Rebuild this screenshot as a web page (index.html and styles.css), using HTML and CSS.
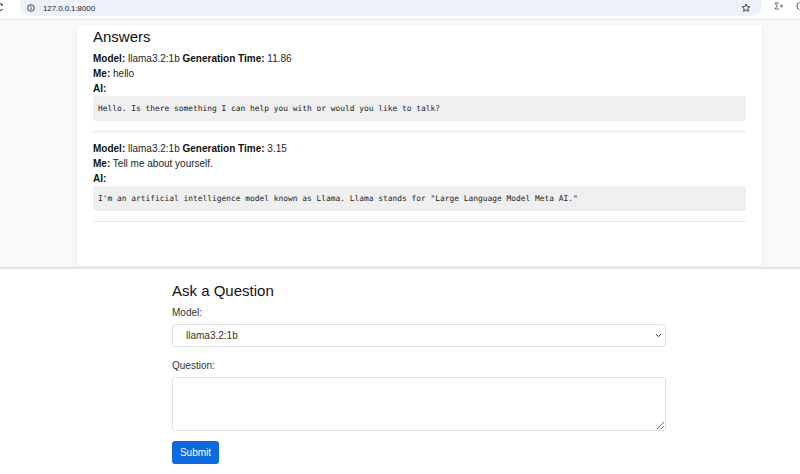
FILE: index.html
```html
<!DOCTYPE html>
<html lang="en">
<head>
<meta charset="utf-8">
<title>Ask</title>
<link rel="stylesheet" href="styles.css">
</head>
<body>
<div class="chrome">
  <svg class="reload" width="8" height="10" viewBox="0 0 8 10"><path d="M5.2 2.6 A3.2 3.2 0 1 0 5.6 7.2" fill="none" stroke="#444" stroke-width="1.1"/><path d="M3.6 1.2 L6.2 2.4 L4.6 4.4 Z" fill="#444"/></svg>
  <div class="omnibox">
    <svg class="info" width="8" height="8" viewBox="0 0 8 8"><circle cx="4" cy="4" r="3.3" fill="none" stroke="#333" stroke-width="0.9"/><rect x="3.55" y="3.4" width="0.9" height="2.4" fill="#333"/><rect x="3.55" y="2" width="0.9" height="0.9" fill="#333"/></svg>
    <span class="url">127.0.0.1:8000</span>
    <span class="spacer"></span>
    <svg class="star" width="10" height="10" viewBox="0 0 10 10"><path d="M5 1 L6.1 3.6 L8.9 3.8 L6.8 5.6 L7.4 8.4 L5 6.9 L2.6 8.4 L3.2 5.6 L1.1 3.8 L3.9 3.6 Z" fill="none" stroke="#333" stroke-width="0.9" stroke-linejoin="round"/></svg>
  </div>
  <svg class="ext" width="10" height="8" viewBox="0 0 10 8"><path d="M5 1 H1 L3.2 4 L1 7 H5" fill="none" stroke="#555" stroke-width="0.9"/><circle cx="7.6" cy="4" r="1.4" fill="#888"/></svg>
  <svg class="ext2" width="4" height="10" viewBox="0 0 4 10"><path d="M3.5 1.5 A2.5 3.5 0 0 0 3.5 8.5" fill="none" stroke="#3a5a8c" stroke-width="1"/></svg>
</div>

<main class="answers-area">
  <section class="card">
    <h2 class="card-title">Answers</h2>
    <div class="entry">
      <div class="line"><b>Model:</b> llama3.2:1b <b>Generation Time:</b> 11.86</div>
      <div class="line"><b>Me:</b> hello</div>
      <div class="line"><b>AI:</b></div>
      <pre class="reply">Hello. Is there something I can help you with or would you like to talk?</pre>
      <hr class="sep">
    </div>
    <div class="entry">
      <div class="line"><b>Model:</b> llama3.2:1b <b>Generation Time:</b> 3.15</div>
      <div class="line"><b>Me:</b> Tell me about yourself.</div>
      <div class="line"><b>AI:</b></div>
      <pre class="reply">I'm an artificial intelligence model known as Llama. Llama stands for "Large Language Model Meta AI."</pre>
      <hr class="sep">
    </div>
  </section>
</main>

<footer class="ask">
  <form class="ask-form">
    <h2 class="ask-title">Ask a Question</h2>
    <label class="field-label" for="model">Model:</label>
    <div class="select-wrap">
      <select id="model" class="select"><option>llama3.2:1b</option></select>
      <svg class="chev" width="7" height="5" viewBox="0 0 7 5"><path d="M1 1.2 L3.5 3.6 L6 1.2" fill="none" stroke="#333" stroke-width="1"/></svg>
    </div>
    <label class="field-label q-label" for="question">Question:</label>
    <textarea id="question" class="question"></textarea>
    <button type="button" class="submit">Submit</button>
  </form>
</footer>
</body>
</html>
```

FILE: styles.css
```css
* { box-sizing: border-box; }
html, body { margin: 0; padding: 0; }
body {
  width: 800px;
  height: 474px;
  overflow: hidden;
  font-family: "Liberation Sans", Arial, sans-serif;
  font-size: 10px;
  color: #212529;
  background: #fff;
}

/* browser chrome */
.chrome {
  height: 20px;
  display: flex;
  align-items: flex-start;
  background: #fff;
  border-bottom: 1px solid #e2e4e7;
  overflow: hidden;
}
.reload { margin: 2px 0 0 -3px; flex: none; }
.omnibox {
  margin-left: 15px;
  margin-top: -6px;
  height: 22px;
  width: 743px;
  border-radius: 11px;
  background: #edf1f9;
  display: flex;
  align-items: center;
  padding: 6px 11px 0 7px;
}
.info { flex: none; }
.url {
  margin-left: 8px;
  font-size: 8px;
  color: #1f1f1f;
  letter-spacing: -0.1px;
}
.spacer { flex: 1; }
.star { flex: none; }
.ext { margin: 2px 0 0 12px; flex: none; }
.ext2 { margin: 1px 0 0 12px; flex: none; }

/* answers area */
.answers-area {
  height: 247px;
  background: #f7f8fa;
  padding-top: 5px;
  overflow: hidden;
}
.card {
  margin-left: 77px;
  width: 685px;
  height: 241px;
  background: #fff;
  border-radius: 4px;
  box-shadow: 0 1px 3px rgba(0, 0, 0, 0.10);
  padding: 3px 16px 0;
}
.card-title {
  margin: 0 0 5px;
  font-size: 15px;
  line-height: 18px;
  font-weight: 400;
  color: #111;
}
.line { line-height: 15px; }
.line b { font-weight: 700; color: #111; }
.reply {
  margin: 0 0 10px;
  background: #efefef;
  border-radius: 3px;
  height: 25px;
  padding: 0 5px;
  font-family: "DejaVu Sans Mono", "Liberation Mono", monospace;
  font-size: 7.9px;
  line-height: 25px;
  color: #222;
  white-space: pre;
  overflow: hidden;
}
.sep {
  margin: 0 0 9px;
  border: 0;
  border-top: 1px solid #e6e7e8;
}

/* ask form */
.ask {
  height: 207px;
  border-top: 2px solid #e3e5e7;
  background: #fff;
  padding-top: 13px;
}
.ask-form {
  margin-left: 172px;
  width: 494px;
  display: flex;
  flex-direction: column;
  align-items: flex-start;
}
.ask-title {
  margin: 0 0 5px;
  font-size: 15px;
  line-height: 18px;
  font-weight: 400;
  color: #111;
}
.field-label {
  line-height: 15px;
  color: #333;
  margin-bottom: 4px;
}
.q-label { margin-top: 11px; }
.select-wrap {
  position: relative;
  width: 100%;
}
.select {
  display: block;
  width: 100%;
  height: 23px;
  appearance: none;
  -webkit-appearance: none;
  border: 1px solid #dee2e6;
  border-radius: 3px;
  background: #fff;
  padding: 0 0 0 13px;
  font-family: "Liberation Sans", Arial, sans-serif;
  font-size: 10px;
  color: #333;
}
.chev {
  position: absolute;
  right: 4px;
  top: 9px;
}
.question {
  display: block;
  width: 100%;
  height: 54px;
  border: 1px solid #dee2e6;
  border-radius: 3px;
  resize: both;
  margin: 0;
}
.submit {
  margin-top: 10px;
  width: 47px;
  height: 23px;
  border: 0;
  border-radius: 3px;
  background: #0d6ae0;
  color: #fff;
  font-family: "Liberation Sans", Arial, sans-serif;
  font-size: 10px;
  padding: 0;
}
```
